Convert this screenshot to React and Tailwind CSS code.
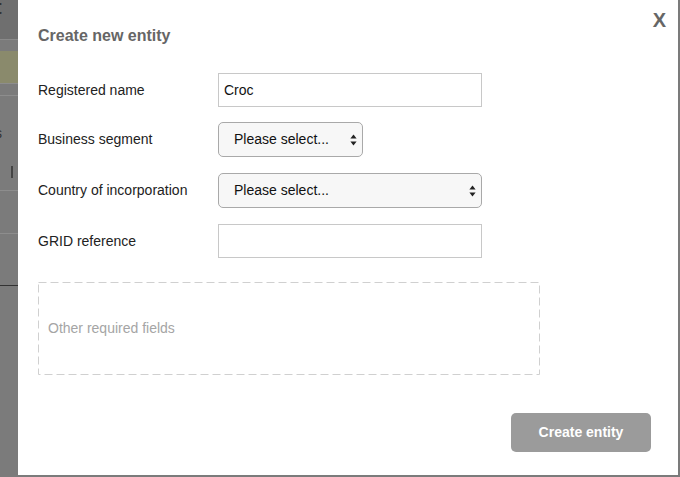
import React from "react";

const SelectArrows = () => (
  <svg width="7" height="12" viewBox="0 0 7 12" className="shrink-0">
    <path d="M3.5 0.5 L6.6 4.6 L0.4 4.6 Z" fill="#222" />
    <path d="M3.5 11.5 L6.6 7.4 L0.4 7.4 Z" fill="#222" />
  </svg>
);

const Row = ({ label, children, className = "" }) => (
  <div className={`flex items-center ${className}`}>
    <div className="w-[180px] text-[14px] text-[#222]">{label}</div>
    {children}
  </div>
);

const FakeSelect = ({ width }) => (
  <div
    className={`${width} h-[35px] flex items-center justify-between pl-[15px] pr-[5px] bg-[#f7f7f7] border border-[#a9a9a9] rounded-[5px] text-[14px] text-[#111]`}
  >
    <span>Please select...</span>
    <SelectArrows />
  </div>
);

export default function App() {
  return (
    <div
      className="w-[680px] h-[477px] flex bg-[#7b7b7b] overflow-hidden"
      style={{ fontFamily: '"Liberation Sans", Arial, sans-serif' }}
    >
      {/* dimmed page behind the modal */}
      <div className="w-[18px] shrink-0 flex flex-col overflow-hidden">
        <div className="h-[40px] bg-[#6f6f6f] border-b border-[#8a8a8a] text-[#333] text-[20px] font-bold leading-[14px] -ml-[5px]">
          t
        </div>
        <div className="h-[11px]" />
        <div className="h-[33px] bg-[#8a8a6c] border-b border-[#8d8d8d]" />
        <div className="h-[12px] border-b border-[#8d8d8d]" />
        <div className="h-[95px] text-[#333] text-[14px] leading-none pt-[30px] -ml-[5px] border-b border-[#8d8d8d]">
          s
          <div className="mt-[26px] w-[2px] h-[12px] ml-[16px] bg-[#444]" />
        </div>
        <div className="h-[43px] border-b border-[#8d8d8d]" />
        <div className="h-[52px] border-b border-[#333]" />
      </div>

      <div className="flex flex-col">
        <div className="w-[660px] h-[475px] bg-white relative pl-[20px] pt-[27px]">
          <button className="absolute top-[10px] right-[12px] text-[20px] font-bold text-[#666] leading-none">
            X
          </button>
          <h2 className="text-[16px] font-bold text-[#666] leading-[18px]">
            Create new entity
          </h2>

          <Row label="Registered name" className="mt-[28px]">
            <div className="w-[264px] h-[34px] border border-[#c8c8c8] flex items-center px-[5px] text-[14px] text-[#111]">
              Croc
            </div>
          </Row>
          <Row label="Business segment" className="mt-[15px]">
            <FakeSelect width="w-[145px]" />
          </Row>
          <Row label="Country of incorporation" className="mt-[16px]">
            <FakeSelect width="w-[264px]" />
          </Row>
          <Row label="GRID reference" className="mt-[16px]">
            <div className="w-[264px] h-[34px] border border-[#c8c8c8]" />
          </Row>

          <div className="relative mt-[24px] w-[502px] h-[93px] flex items-center pl-[10px] text-[14px] text-[#a5a5a5]">
            <svg className="absolute inset-0" width="502" height="93">
              <rect
                x="0.5"
                y="0.5"
                width="501"
                height="92"
                fill="none"
                stroke="#d0d0d0"
                strokeDasharray="8 4"
              />
            </svg>
            <span className="relative">Other required fields</span>
          </div>

          <div className="flex justify-end pr-[27px] mt-[38px]">
            <button className="w-[140px] h-[39px] rounded-[5px] bg-[#9b9b9b] text-white font-bold text-[14px]">
              Create entity
            </button>
          </div>
        </div>
      </div>

      <div className="w-[2px] h-[477px] bg-[#7b7b7b]" />
    </div>
  );
}
